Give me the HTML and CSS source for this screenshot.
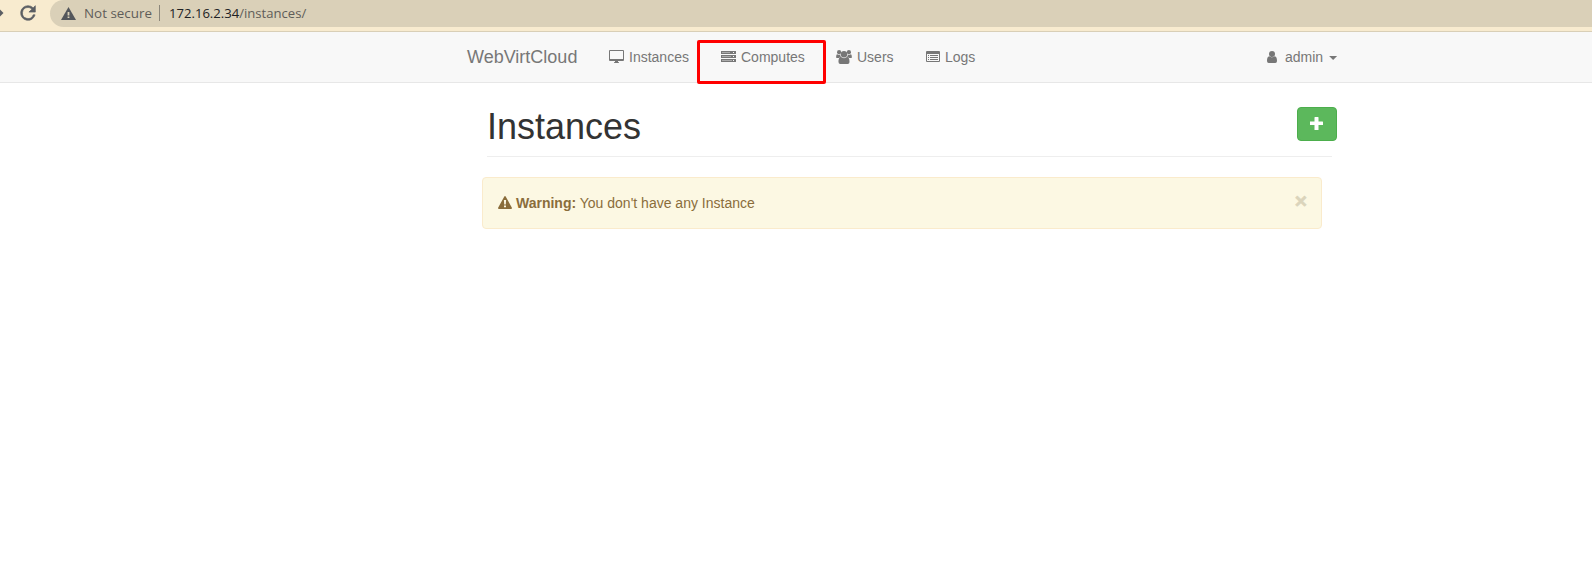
FILE: index.html
```
<!DOCTYPE html>
<html lang="en">
<head>
<meta charset="utf-8">
<title>WebVirtCloud</title>
<link rel="stylesheet" href="styles.css">
</head>
<body>
<header class="toolbar">
  <svg class="forward" width="4" height="10" viewBox="0 0 4 10"><path d="M0 1.500L3.500 5L0 8.500Z" fill="#5b5e63"/></svg>
  <svg class="reload" width="24" height="24" viewBox="0 0 24 24"><path d="M17.65 6.35A7.96 7.96 0 0 0 12 4a8 8 0 1 0 7.73 10h-2.08A6 6 0 1 1 12 6c1.66 0 3.14.69 4.22 1.78L13 11h7V4z" fill="#5b5e63" stroke="#5b5e63" stroke-width=".7"/></svg>
  <div class="address">
    <svg class="insecure" width="15" height="13" viewBox="0 0 15 13"><path d="M7.500 0L15 13H0Z" fill="#53565b"/><path d="M6.600 5h1.800v3.400H6.600zM6.600 9.500h1.800v1.600H6.600z" fill="#dad0b8"/></svg>
    <span class="security">Not secure</span>
    <span class="divider"></span>
    <span class="url"><span class="host">172.16.2.34</span>/instances/</span>
  </div>
</header>
<nav class="navbar">
  <a class="brand">WebVirtCloud</a>
  <a class="item instances">
    <svg width="15" height="13" viewBox="0 0 15 13"><path fill-rule="evenodd" d="M1 0H14Q15 0 15 1V10Q15 11 14 11H9V12L10 12.300V13H5V12.300L6 12V11H1Q0 11 0 10V1Q0 0 1 0ZM1 1V9H14V1Z"/></svg>
    <span>Instances</span>
  </a>
  <a class="item computes">
    <svg width="15" height="11" viewBox="0 0 15 11"><path fill-rule="evenodd" d="M0 0H15V3H0ZM1 1V2H9V1ZM12 1V2H13V1ZM0 4H15V7H0ZM1 5V6H6V5ZM12 5V6H13V5ZM0 8H15V11H0ZM1 9V10H11V9ZM12 9V10H13V9Z"/><path class="shelf" d="M1 1H9V2H1ZM1 5H10V6H1ZM1 9H11V10H1Z"/></svg>
    <span>Computes</span>
  </a>
  <a class="item users">
    <svg width="16" height="14" viewBox="0 0 16 14"><circle cx="3.1" cy="2.2" r="2.1"/><circle cx="12.9" cy="2.2" r="2.1"/><circle cx="8" cy="4.2" r="3.2"/><path d="M.2 7.5C0 5.5.5 4.2 1.2 4.2Q3 5.3 4.2 4.5Q4.2 6 5 7Q3.700 7 2.800 8H1Q.3 8 .2 7.5ZM15.8 7.5C16 5.5 15.500 4.200 14.800 4.200Q13 5.300 11.800 4.500Q11.800 6 11 7Q12.300 7 13.200 8H15Q15.700 8 15.800 7.500ZM5 7.100Q8 9.300 11 7.100C13 7.100 13.500 9.500 13.500 12Q13.500 14 11.700 14H4.300Q2.500 14 2.500 12C2.500 9.500 3 7.100 5 7.100Z"/></svg>
    <span>Users</span>
  </a>
  <a class="item logs">
    <svg width="14" height="11" viewBox="0 0 14 11"><path fill-rule="evenodd" d="M1 0H13Q14 0 14 1V10Q14 11 13 11H1Q0 11 0 10V1Q0 0 1 0ZM1 3V10H13V3ZM2 4H3V5H2ZM4 4H12V5H4ZM2 6H3V7H2ZM4 6H12V7H4ZM2 8H3V9H2ZM4 8H12V9H4Z"/></svg>
    <span>Logs</span>
  </a>
  <a class="item admin">
    <svg width="10" height="12" viewBox="0 0 10 12"><circle cx="5" cy="3" r="3"/><path d="M2.300 5.200Q5 7.400 7.700 5.200C9.500 5.500 10 7.500 10 10Q10 12 8.300 12H1.700Q0 12 0 10C0 7.500 .500 5.500 2.300 5.200Z"/></svg>
    <span>admin</span>
    <span class="caret"></span>
  </a>
  <div class="highlight"></div>
</nav>
<main class="page">
  <div class="heading">
    <h1>Instances</h1>
    <button class="add" aria-label="Add"><svg width="13" height="13" viewBox="0 0 13 13"><path d="M5 0H8Q8.500 0 8.500 .500V4.500H12.500Q13 4.500 13 5V8H8.500V13H4.500V8H0V4.500H4.500V.500Q4.500 0 5 0Z" fill="#fff"/></svg></button>
  </div>
  <div class="alert">
    <svg width="14" height="13" viewBox="0 0 14 13"><path fill-rule="evenodd" d="M6.300.500Q7 -.500 7.700.500L13.900 11.800Q14.200 13 13 13H1Q-.200 13 .100 11.800ZM5.900 4L6.200 8.500H7.800L8.100 4ZM6 9.500V11.300H8V9.500Z"/></svg>
    <p><strong>Warning:</strong> You don't have any Instance</p>
    <button class="close">×</button>
  </div>
</main>
</body>
</html>
```
FILE: styles.css
```
* { box-sizing: border-box; }
body { margin: 0; background: #fff; font: 14px/20px "Liberation Sans", Arial, sans-serif; color: #333; }
svg { display: block; flex: none; }
.toolbar { display: flex; height: 32px; background: #f8ebcf; border-bottom: 1px solid #d9cfb7; }
.forward { margin-top: 8px; }
.reload { width: 22px; height: 22px; margin: 2px 7px 0 13px; }
.address { display: flex; flex: 1; align-items: center; height: 27px; margin-left: 4px; padding: 0 0 1px 11px; background: #dad0b8; border-radius: 14px 0 0 14px; font: 14px/20px "Open Sans", "Noto Sans", sans-serif; color: #5f5d58; white-space: nowrap; }
.security { width: 67px; margin-left: 8px; padding-bottom: 1px; font-size: 13.4px; }
.divider { width: 1px; height: 16px; margin: 0 9px 0 8px; background: #8b867a; }
.url { padding-bottom: 1px; font-size: 13.1px; }
.host { color: #202124; }
.navbar { position: relative; display: flex; height: 51px; padding-left: 467px; background: #f8f8f8; border-bottom: 1px solid #e7e7e7; color: #777; }
.brand { width: 142px; padding-top: 15px; font-size: 18px; }
.item { display: flex; gap: 5px; padding-top: 15px; white-space: nowrap; }
.item svg { margin-top: 4px; fill: #777; }
.item.instances svg, .item.users svg { margin-top: 3px; }
.instances { width: 112px; }
.item .shelf { fill: #aaa; }
.computes { width: 115px; }
.users { width: 90px; }
.logs { width: 341px; }
.item.admin svg { margin-right: 3px; }
.caret { width: 8px; height: 4px; margin: 9px 0 0 1px; background: #777; clip-path: polygon(0 0, 100% 0, 50% 100%); }
.highlight { position: absolute; left: 697px; top: 8px; width: 129px; height: 44px; border: 3px solid #f00; border-radius: 2px; }
.page { padding: 24px 255px 0 482px; }
.heading { display: flex; justify-content: space-between; height: 50px; margin-left: 5px; position: relative; }
.heading::after { content: ""; position: absolute; left: 0; right: 5px; bottom: 0; height: 1px; background: #eee; }
h1 { margin: 0; font-size: 36px; font-weight: 500; line-height: 40px; }
.add { display: flex; align-items: center; justify-content: center; width: 40px; height: 34px; padding: 0 1px 1px 0; background: #5cb85c; border: 1px solid #4cae4c; border-radius: 4px; }
.alert { display: flex; width: 840px; height: 52px; margin-top: 20px; padding: 15px; background: #fcf8e3; border: 1px solid #faebcc; border-radius: 4px; color: #8a6d3b; }
.alert svg { margin-top: 3px; fill: #8a6d3b; }
.alert p { margin: 0 auto 0 4px; }
.close { height: 21px; margin: -3px -1px 0 0; padding: 0; background: none; border: 0; font: bold 21px/21px "Liberation Sans", Arial, sans-serif; color: #5a4a20; -webkit-text-stroke: .7px #5a4a20; opacity: .2; }
```
